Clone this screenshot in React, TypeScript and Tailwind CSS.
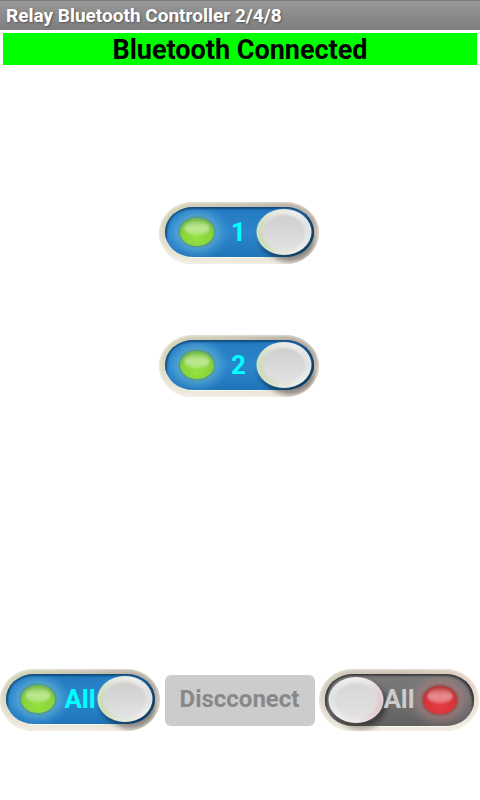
import { useId, useState } from "react";

interface SwitchProps {
  label: string;
  name: string;
  on: boolean;
  onPress: () => void;
}

function SwitchArt({ on }: { on: boolean }) {
  const id = useId();
  const url = (name: string) => `url(#${id}${name})`;
  const knobX = on ? 125 : 37;
  const ledX = on ? 38 : 121;
  const midY = on ? 30 : 31;
  const faceHeight = on ? 50 : 52;

  return (
    <svg viewBox="0 0 160 62" className="col-start-1 row-start-1 h-full w-full" aria-hidden="true">
      <defs>
        <linearGradient id={`${id}rim`} x1="0" y1="0" x2="1" y2="0.2">
          <stop offset="0" stopColor={on ? "#d6d8bc" : "#d0ccbe"} />
          <stop offset="0.5" stopColor={on ? "#c9c4b4" : "#cdc3b4"} />
          <stop offset="1" stopColor={on ? "#b3a8a0" : "#e8d3c8"} />
        </linearGradient>
        <linearGradient id={`${id}rimLight`} x1="0" y1="0" x2="0" y2="1">
          <stop offset="0.3" stopColor="#f2eee2" stopOpacity="0" />
          <stop offset="0.95" stopColor="#f2eee2" stopOpacity="0.9" />
        </linearGradient>
        <linearGradient id={`${id}face`} x1="0" y1="0" x2="0" y2="1">
          <stop offset="0" stopColor={on ? "#2379be" : "#7a7a7a"} />
          <stop offset="0.5" stopColor={on ? "#2b86cc" : "#727272"} />
          <stop offset="1" stopColor={on ? "#1e72b6" : "#5f5f5f"} />
        </linearGradient>
        <radialGradient id={`${id}glow`}>
          <stop offset="0.5" stopColor={on ? "#72c0de" : "#b98080"} stopOpacity="0.65" />
          <stop offset="0.75" stopColor={on ? "#56a9dc" : "#a48080"} stopOpacity="0.35" />
          <stop offset="1" stopColor={on ? "#3a94d4" : "#907878"} stopOpacity="0" />
        </radialGradient>
        <radialGradient id={`${id}led`} cx="0.5" cy="0.75" r="0.7">
          <stop offset="0" stopColor={on ? "#94e040" : "#e43c40"} />
          <stop offset="0.65" stopColor={on ? "#88d43a" : "#d63439"} />
          <stop offset="1" stopColor={on ? "#74ba48" : "#b8383c"} />
        </radialGradient>
        <linearGradient id={`${id}shine`} x1="0" y1="0" x2="0" y2="1">
          <stop offset="0" stopColor="#fff" stopOpacity="0.15" />
          <stop offset="0.5" stopColor="#fff" stopOpacity="0.45" />
          <stop offset="1" stopColor="#fff" stopOpacity="0.25" />
        </linearGradient>
        <linearGradient id={`${id}knob`} x1={on ? "0" : "1"} y1="0.6" x2={on ? "1" : "0"} y2="0.4">
          <stop offset="0" stopColor={on ? "#c6d8ae" : "#dcc2c4"} />
          <stop offset="0.35" stopColor={on ? "#e0e4da" : "#eae4e4"} />
          <stop offset="0.75" stopColor="#ececea" />
          <stop offset="1" stopColor="#dcdee0" />
        </linearGradient>
        <linearGradient id={`${id}cap`} x1="0" y1="0" x2="0" y2="1">
          <stop offset="0" stopColor={on ? "#cfcfcf" : "#d6d6d6"} />
          <stop offset="1" stopColor="#e2e2e2" />
        </linearGradient>
        <filter id={`${id}soft`} x="-30%" y="-30%" width="160%" height="160%">
          <feGaussianBlur stdDeviation="2.5" />
        </filter>
        <filter id={`${id}edge`} x="-20%" y="-20%" width="140%" height="140%">
          <feGaussianBlur stdDeviation="0.8" />
        </filter>
        <clipPath id={`${id}outer`}>
          <rect width="160" height="62" rx="34" ry="31" />
        </clipPath>
        <clipPath id={`${id}inner`}>
          <rect x="6" y="5" width="149" height={faceHeight} rx="28" ry="25" />
        </clipPath>
      </defs>

      <g clipPath={url("outer")}>
        <rect width="160" height="62" fill={url("rim")} />
        <rect width="160" height="62" fill={url("rimLight")} />
        <rect
          width="160"
          height="62"
          rx="34"
          ry="31"
          fill="none"
          stroke="#faf7f0"
          strokeOpacity="0.7"
          strokeWidth="2"
          filter={url("edge")}
        />
        <ellipse
          cx={on ? 131 : 42}
          cy={on ? 40 : 41}
          rx="24"
          ry="20"
          fill="#4b4542"
          opacity={on ? 0.55 : 0.4}
          filter={url("soft")}
        />
      </g>

      <g clipPath={url("inner")}>
        <rect x="6" y="5" width="149" height="52" fill={url("face")} />
        <ellipse cx={ledX} cy={midY} rx="34" ry="29" fill={url("glow")} />
        <path
          d={on ? "M6 40V30Q8 6 34 5H127Q152 6 155 30V40" : "M6 42V31Q8 6 34 5H126Q151 6 155 31V40"}
          fill="none"
          stroke={on ? "#0b3a64" : "#2c2c2c"}
          strokeWidth="3"
          filter={url("edge")}
        />
        <ellipse
          cx={knobX + 3}
          cy={midY + 4}
          rx="28"
          ry="23"
          fill={on ? "#06263f" : "#1e1e1e"}
          opacity={on ? 0.8 : 0.6}
          filter={url("soft")}
        />
      </g>
      <path
        d={on ? "M30 55.5H104" : "M60 57.5H128"}
        stroke="#fff"
        strokeOpacity="0.75"
        strokeWidth="1"
        fill="none"
      />

      <ellipse cx={ledX} cy={midY} rx="18.5" ry="15.5" fill={on ? "#4f9484" : "#8a5254"} filter={url("edge")} />
      <ellipse cx={ledX} cy={midY} rx="17" ry="14" fill={url("led")} />
      <ellipse cx={ledX} cy={midY - 4} rx="12.5" ry="7.5" fill={url("shine")} filter={url("edge")} />

      <ellipse cx={knobX} cy={midY} rx="27.5" ry="23" fill={url("knob")} />
      <ellipse
        cx={knobX}
        cy={midY}
        rx="26.5"
        ry="22"
        fill="none"
        stroke="#fff"
        strokeOpacity="0.5"
        filter={url("edge")}
      />
      <ellipse cx={knobX} cy={midY + 0.5} rx="21.5" ry="17.5" fill={url("cap")} filter={url("edge")} />
    </svg>
  );
}

function RelaySwitch({ label, name, on, onPress }: SwitchProps) {
  return (
    <button
      type="button"
      aria-label={name}
      onClick={onPress}
      className="grid h-[62px] w-40 shrink-0 items-center justify-items-center"
    >
      <SwitchArt on={on} />
      <span
        className={`z-10 col-start-1 row-start-1 pb-0.5 text-[26px] leading-8 font-bold ${
          on ? "text-[#00ffff]" : "text-[#cccccc]"
        }`}
      >
        {label}
      </span>
    </button>
  );
}

export default function App() {
  const [relays, setRelays] = useState([true, true]);

  const toggle = (index: number) =>
    setRelays((prev) => prev.map((value, i) => (i === index ? !value : value)));

  return (
    <div className="flex min-h-screen flex-col bg-white font-['Roboto',sans-serif]">
      <header className="flex h-[30px] items-center border-t border-[#7c7c7c] bg-linear-to-b from-[#989898] to-[#7e7e7e] px-1.5">
        <h1 className="text-[19px] leading-6 font-bold text-white [text-shadow:1px_1px_2px_#555]">
          Relay Bluetooth Controller 2/4/8
        </h1>
      </header>

      <p
        role="status"
        className="mx-[3px] mt-[3px] h-8 bg-[#00ff00] text-center text-[27px] leading-[34px] font-bold text-black"
      >
        Bluetooth Connected
      </p>

      <main className="flex flex-1 flex-col items-center gap-[71px] pt-[137px] pr-[3px]">
        {relays.map((on, i) => (
          <RelaySwitch
            key={i}
            label={String(i + 1)}
            name={`Relay ${i + 1}`}
            on={on}
            onPress={() => toggle(i)}
          />
        ))}
      </main>

      <footer className="flex items-center justify-between pr-px pb-[69px]">
        <RelaySwitch label="All" name="All on" on onPress={() => setRelays([true, true])} />
        <button
          type="button"
          className="h-[51px] w-[150px] rounded-md bg-[#cccccc] pb-0.5 text-[24px] leading-8 font-bold text-[#888888]"
        >
          Discconect
        </button>
        <RelaySwitch label="All" name="All off" on={false} onPress={() => setRelays([false, false])} />
      </footer>
    </div>
  );
}
